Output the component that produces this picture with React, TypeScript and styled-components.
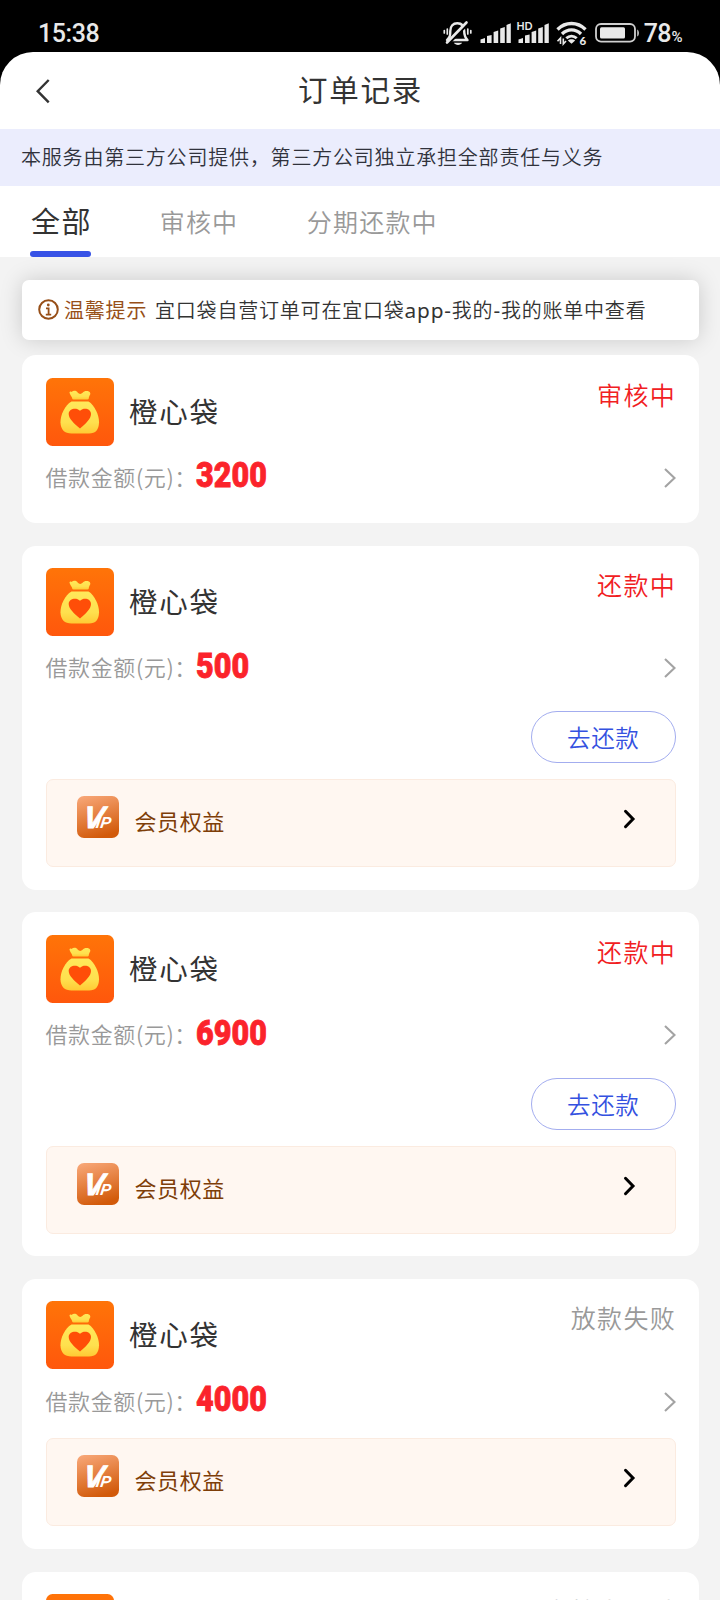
import React from 'react';
import styled, { createGlobalStyle } from 'styled-components';

const GlobalStyle = createGlobalStyle`
  *, *::before, *::after { box-sizing: border-box; }
  html, body { margin: 0; background: #f3f3f3; }
  body {
    height: 1600px;
    overflow: hidden;
    font-family: 'Noto Sans CJK SC', sans-serif;
    color: #333;
  }
`;

const Screen = styled.div`
  width: 720px;
  height: 1600px;
  overflow: hidden;
  display: flex;
  flex-direction: column;
  background: #f3f3f3;
`;

const TopArea = styled.div`
  flex: none;
  background: #000;
`;

const StatusBar = styled.div`
  height: 52px;
  padding: 14px 37.5px 0 38px;
  display: flex;
  align-items: flex-start;
  justify-content: space-between;
  color: #e9e9e9;
`;

const Clock = styled.span`
  font: 500 25px/39px Roboto, sans-serif;
  letter-spacing: -0.4px;
`;

const StatusIcons = styled.div`
  display: flex;
  align-items: flex-start;
`;

const Percent = styled.span`
  margin-left: 3px;
  font: 500 25px/39px Roboto, sans-serif;
  letter-spacing: -0.9px;

  small {
    margin-left: 1px;
    font-size: 15px;
    font-weight: 500;
    letter-spacing: 0;
  }
`;

const Header = styled.header`
  height: 77px;
  border-radius: 33px 33px 0 0;
  background: #fff;
  display: grid;
  grid-template-columns: 80px 1fr 80px;
  align-items: center;
`;

const BackButton = styled.button`
  border: 0;
  padding: 0 0 0 34px;
  background: none;
  display: flex;
`;

const Title = styled.h1`
  margin: -5px 0 0;
  padding-left: 1px;
  text-align: center;
  font-size: 29.5px;
  font-weight: 400;
  line-height: 40px;
  letter-spacing: 1.7px;
  color: #333;
`;

const Notice = styled.div`
  flex: none;
  height: 57px;
  padding: 0 21px;
  background: #ebedfd;
  font-size: 20px;
  line-height: 56px;
  letter-spacing: 0.8px;
  font-weight: 350;
  color: #30323c;
  white-space: nowrap;
`;

const Tabs = styled.nav`
  flex: none;
  height: 71px;
  padding-left: 30px;
  background: #fff;
  display: flex;
  white-space: nowrap;
`;

const Tab = styled.div<{ $active?: boolean; $gap?: number }>`
  display: flex;
  flex-direction: column;
  justify-content: space-between;
  margin-right: ${(p) => p.$gap ?? 0}px;
  line-height: ${(p) => (p.$active ? 68 : 70)}px;
  font-size: ${(p) => (p.$active ? 29 : 25)}px;
  letter-spacing: ${(p) => (p.$active ? 1.6 : 1.2)}px;
  text-indent: ${(p) => (p.$active ? 1 : 0)}px;
  font-weight: ${(p) => (p.$active ? 400 : 350)};
  color: ${(p) => (p.$active ? '#333' : '#999')};
`;

const TabLine = styled.span`
  flex: none;
  width: 61px;
  height: 6px;
  margin-top: -4px;
  border-radius: 3px;
  background: #3752e6;
`;

const Content = styled.main`
  flex: 1;
  min-height: 0;
  padding: 23px 21px 0 22px;
`;

const Tip = styled.div`
  height: 60px;
  margin-bottom: 15px;
  padding-left: 16px;
  border-radius: 7px;
  background: #fff;
  box-shadow: 0 0 22px rgba(0, 0, 0, 0.17);
  display: flex;
  align-items: center;
  font-size: 20px;
  line-height: 58px;
  letter-spacing: 0.8px;
  font-weight: 350;
  white-space: nowrap;
`;

const TipLabel = styled.span`
  width: 96px;
  padding-left: 5px;
  color: #974f18;
  font-weight: 400;
`;

const Latin = styled.span`
  font-family: 'Noto Sans', sans-serif;
  font-size: 20.8px;
  font-weight: 400;
`;

const Card = styled.article<{ $height: number }>`
  height: ${(p) => p.$height}px;
  margin-bottom: 22.7px;
  padding: 22.5px 23.5px;
  border-radius: 14px;
  background: #fff;
`;

const CardHead = styled.div`
  height: 68px;
  display: flex;
`;

const Name = styled.h2`
  flex: 1;
  margin: 0 0 0 15.5px;
  font-size: 28.5px;
  font-weight: 400;
  line-height: 65px;
  letter-spacing: 1.8px;
`;

const Status = styled.span<{ $muted: boolean }>`
  margin-right: -0.5px;
  font-size: 25px;
  font-weight: 350;
  line-height: 33px;
  letter-spacing: 1.3px;
  color: ${(p) => (p.$muted ? '#999' : '#f1201f')};
`;

const AmountRow = styled.div`
  height: 40px;
  margin-top: 10.2px;
  display: flex;
  align-items: center;
`;

const AmountLabel = styled.span`
  width: 150.2px;
  font-size: 22px;
  font-weight: 350;
  line-height: 38px;
  letter-spacing: 0.6px;
  color: #999;
  white-space: nowrap;

  + strong + svg {
    margin-top: 4px;
  }
`;

const Amount = styled.strong`
  flex: 1;
  margin-top: -1px;
  font: 900 35.5px/36px Roboto, sans-serif;
  letter-spacing: 0.1px;
  -webkit-text-stroke: 0.8px #fb232b;
  color: #fb232b;
  transform: scaleX(0.86);
  transform-origin: 0 50%;
`;

const Actions = styled.div`
  height: 53px;
  margin-top: 25px;
  display: flex;
  justify-content: flex-end;
`;

const RepayButton = styled.button`
  width: 144.5px;
  height: 52px;
  padding: 0;
  border: 1.3px solid #a3adef;
  border-radius: 26px;
  background: #fff;
  font: 350 23.5px/48px 'Noto Sans CJK SC', sans-serif;
  letter-spacing: 0.6px;
  color: #3451e0;
`;

const VipBar = styled.div<{ $top: number }>`
  height: 88.5px;
  margin-top: ${(p) => p.$top}px;
  padding: 0 38.5px 0 30.5px;
  border: 1px solid #fbebe0;
  border-radius: 7px;
  background: #fff7f1;
  display: flex;
`;

const VipText = styled.span`
  flex: 1;
  margin-left: 15.5px;
  font-size: 22px;
  line-height: 81px;
  letter-spacing: 0.6px;
  color: #7e3e08;
`;

const ArrowSlot = styled.span`
  padding-top: 28.5px;
`;

const VipSlot = styled.span`
  padding-top: 16px;
`;

const GlyphSvg = styled.svg`
  margin-top: -14px;
`;

const StatusGlyphs = () => (
  <GlyphSvg width="200" height="52" viewBox="440 0 200 52" fill="none">
    <g stroke="#e9e9e9" strokeLinecap="round">
      <path d="M448 40h18.500c-3-3-3.300-5-3.300-9 0-5-2.700-7.800-6.900-7.800s-7 2.800-7 7.800c0 4.500-.3 6-3.300 9z" strokeLinejoin="round" strokeWidth="2.400" />
      <path d="M447.500 43.500l20-20.500" stroke="#000" strokeWidth="3" />
      <path d="M446 42.500l19.500-20" strokeWidth="2.600" />
      <path d="M446.300 29v5M443.300 30.500v2.500M466.800 29v5M469.800 30.500v2.500" strokeWidth="1.700" />
    </g>
    <path d="M453 42.800h8c-1 2.800-7 2.800-8 0z" fill="#e9e9e9" />
    <g fill="#e9e9e9">
      <path d="M479.500 39.500l4.500-1.500v5h-4.500zM486 36l4.600-1v8H486zM492.600 32l4.600-1.500V43h-4.600zM499.200 28.500l4.600-1.500v16h-4.600zM505.500 25l4.300-1.700V43h-4.300z" />
      <path d="M517.500 39.500l4.500-1.500v5h-4.500zM524 35.500l4.600-1v8.500H524zM530.600 32l4.600-1.500V43h-4.600zM537.200 28.500l4.600-1.500v16h-4.600zM543.500 25l4.300-1.700V43h-4.300z" />
      <text x="515.500" y="30" fontFamily="Lato, sans-serif" fontWeight="700" fontSize="10.500">HD</text>
    </g>
    <g stroke="#e9e9e9" strokeWidth="3.300">
      <path d="M556.500 29.500c8-8 20-8 28 0" />
      <path d="M561 34c5.500-5.500 13.500-5.500 19 0" />
      <path d="M565.300 38.300c3-3 7.400-3 10.400 0" strokeWidth="2.800" />
    </g>
    <path d="M566.800 40.500c2-1.800 5.400-1.800 7.400 0l-3.700 3.300z" fill="#e9e9e9" />
    <path d="M559.500 44v-6l-3 3.300M562.300 38.500V44l2.700-3" stroke="#e9e9e9" strokeWidth="1.600" />
    <circle cx="582" cy="41" r="4.800" fill="#000" />
    <text x="578.400" y="45" fill="#e9e9e9" fontFamily="Lato, sans-serif" fontWeight="900" fontSize="11.500">6</text>
    <rect x="595" y="24" width="39" height="17.600" rx="5" stroke="#d0d0d0" strokeWidth="1.800" />
    <rect x="599" y="27.300" width="25" height="11.200" rx="1.500" fill="#e9e9e9" />
    <path d="M636.300 29.500c2 1 2 6 0 7z" fill="#e9e9e9" />
  </GlyphSvg>
);

const BackIcon = () => (
  <svg width="18" height="28" viewBox="0 0 18 28" fill="none" stroke="#333" strokeWidth="2.400">
    <path d="M14.700 3L3.700 14.200l11 11.200" />
  </svg>
);

const InfoIcon = () => (
  <svg width="21" height="22" viewBox="0 0 21 22" fill="none" stroke="#974f18">
    <circle cx="10.500" cy="10.500" r="9.300" strokeWidth="2" />
    <circle cx="10.300" cy="6" r="1.400" fill="#974f18" stroke="none" />
    <path d="M8 9.300h2.600v6.300M7.800 15.600h5.400" strokeWidth="1.800" />
  </svg>
);

const MoreIcon = () => (
  <svg width="13" height="22" viewBox="0 0 13 22" fill="none" stroke="#a3a3a3" strokeWidth="2.100">
    <path d="M2 2l9.500 9L2 20" />
  </svg>
);

const VipArrow = () => (
  <svg width="13" height="22" viewBox="0 0 13 22" fill="none" stroke="#000" strokeWidth="3" strokeLinecap="round">
    <path d="M2.500 3.300l7.500 7.700-7.500 7.700" />
  </svg>
);

const BagLogo = () => (
  <svg width="68" height="68" viewBox="0 0 68 68">
    <defs>
      <linearGradient id="tile" x1="0" y1="0" x2="0" y2="1">
        <stop offset="0" stopColor="#ff7408" />
        <stop offset="1" stopColor="#ff570c" />
      </linearGradient>
      <linearGradient id="bag" x1="0" y1="0" x2="0" y2="1">
        <stop offset="0" stopColor="#ffe95a" />
        <stop offset=".65" stopColor="#ffe04e" />
        <stop offset="1" stopColor="#ffca34" />
      </linearGradient>
    </defs>
    <rect width="68" height="68" rx="6.500" fill="url(#tile)" />
    <path d="M23.800 15.500c-.8-1.400.3-2.600 1.800-1.600 1.900-1.700 5-1.400 6.200.9 1.300 1.500 3.500 1.500 4.800 0 1.700-2.400 6.800-2.200 7.600.2.600 1.800-1.300 2.500-1.400 5.600-.2.600-.6.900-1.300.9H27.500c-.8 0-1.200-.3-1.300-.9-.3-2.400-1.900-3-2.400-5.100z" fill="url(#bag)" />
    <path d="M25.500 23.600h17c6 3.600 10.500 13.400 10.500 20.600 0 7.300-3.400 11.300-10 11.300H25.500c-6.800 0-11-4-11-11.300 0-7.200 4.500-17 11-20.600z" fill="url(#bag)" />
    <path d="M34 50.500c-5.500-4.700-11.300-9.500-11.300-14.500 0-5.500 7.700-7 11.300-3.300 3.700-3.700 11-2.200 11 3.300 0 5-5.500 9.800-11 14.500z" fill="#ff4e08" />
  </svg>
);

const VipLogo = () => (
  <svg width="42" height="42" viewBox="0 0 42 42">
    <defs>
      <linearGradient id="vip" x1=".2" y1="0" x2=".5" y2="1">
        <stop offset="0" stopColor="#f7a575" />
        <stop offset="1" stopColor="#d25a0a" />
      </linearGradient>
    </defs>
    <rect width="42" height="42" rx="7" fill="url(#vip)" />
    <text
      x="0"
      y="0"
      transform="translate(5.200 32.300) skewX(-8)"
      fill="#fff"
      stroke="#fff"
      fontFamily="'Liberation Sans', sans-serif"
      fontWeight="700"
      fontStyle="italic"
    >
      <tspan fontSize="31" strokeWidth=".8">V</tspan>
      <tspan x="13" fontSize="16" strokeWidth="0">IP</tspan>
    </text>
  </svg>
);

interface Order {
  amount: string;
  status: string;
  muted?: boolean;
  repay?: boolean;
  vip?: boolean;
  height: number;
}

const orders: Order[] = [
  { amount: '3200', status: '审核中', height: 168.1 },
  { amount: '500', status: '还款中', repay: true, vip: true, height: 343.9 },
  { amount: '6900', status: '还款中', repay: true, vip: true, height: 343.9 },
  { amount: '4000', status: '放款失败', muted: true, vip: true, height: 270 },
  { amount: '3000', status: '审核未通过', muted: true, height: 168.1 },
];

const OrderCard = ({ order }: { order: Order }) => (
  <Card $height={order.height}>
    <CardHead>
      <BagLogo />
      <Name>橙心袋</Name>
      <Status $muted={!!order.muted}>{order.status}</Status>
    </CardHead>
    <AmountRow>
      <AmountLabel>借款金额(元)：</AmountLabel>
      <Amount>{order.amount}</Amount>
      <MoreIcon />
    </AmountRow>
    {order.repay && (
      <Actions>
        <RepayButton>去还款</RepayButton>
      </Actions>
    )}
    {order.vip && (
      <VipBar $top={order.repay ? 14.5 : 18}>
        <VipSlot>
          <VipLogo />
        </VipSlot>
        <VipText>会员权益</VipText>
        <ArrowSlot>
          <VipArrow />
        </ArrowSlot>
      </VipBar>
    )}
  </Card>
);

export default function App() {
  return (
    <Screen>
      <GlobalStyle />
      <TopArea>
        <StatusBar>
          <Clock>15:38</Clock>
          <StatusIcons>
            <StatusGlyphs />
            <Percent>
              78<small>%</small>
            </Percent>
          </StatusIcons>
        </StatusBar>
        <Header>
          <BackButton aria-label="返回">
            <BackIcon />
          </BackButton>
          <Title>订单记录</Title>
        </Header>
      </TopArea>
      <Notice>本服务由第三方公司提供，第三方公司独立承担全部责任与义务</Notice>
      <Tabs>
        <Tab $active $gap={67.5}>
          全部
          <TabLine />
        </Tab>
        <Tab $gap={68.5}>审核中</Tab>
        <Tab>分期还款中</Tab>
      </Tabs>
      <Content>
        <Tip>
          <InfoIcon />
          <TipLabel>温馨提示</TipLabel>
          <span>
            宜口袋自营订单可在宜口袋<Latin>app-</Latin>我的<Latin>-</Latin>我的账单中查看
          </span>
        </Tip>
        {orders.map((order, i) => (
          <OrderCard key={i} order={order} />
        ))}
      </Content>
    </Screen>
  );
}
